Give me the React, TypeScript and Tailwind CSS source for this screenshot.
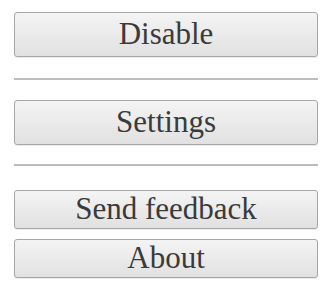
import React from 'react'

const Btn = ({ label, h }: { label: string; h: string }) => (
  <button
    className={`flex w-full items-center justify-center rounded-[3px] border border-[#a6a6a6] bg-gradient-to-b from-[#f4f4f4] to-[#e1e1e1] pb-[3px] font-['Liberation_Serif'] text-[31px] leading-none text-[#3a3a3a] shadow-[0_1px_1px_rgba(0,0,0,0.08)] ${h}`}
  >
    {label}
  </button>
)

const Sep = () => <div className="h-[2px] w-full bg-[#bdbdbd]" />

export default function App() {
  return (
    <div className="h-[294px] w-[330px] bg-white font-['Liberation_Serif']">
      <div className="ml-[14px] flex w-[304px] flex-col pt-[12px]">
        <Btn label="Disable" h="h-[45px]" />
        <div className="mt-[21px] mb-[20px]">
          <Sep />
        </div>
        <Btn label="Settings" h="h-[45px]" />
        <div className="mt-[19px] mb-[24px]">
          <Sep />
        </div>
        <div className="flex flex-col gap-[10px]">
          <Btn label="Send feedback" h="h-[39px]" />
          <Btn label="About" h="h-[39px]" />
        </div>
      </div>
    </div>
  )
}
